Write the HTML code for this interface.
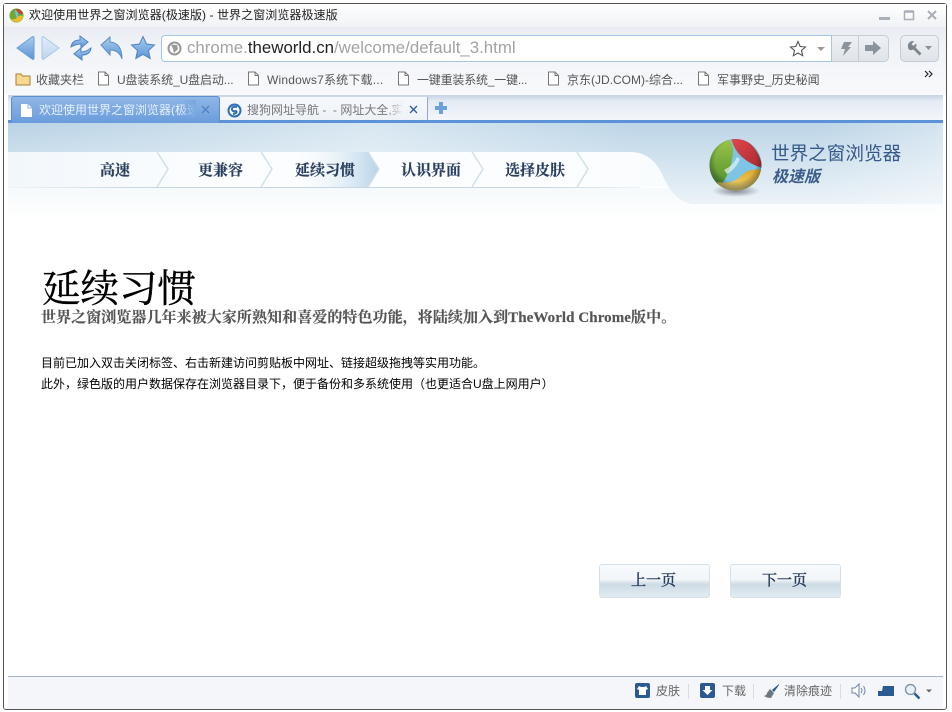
<!DOCTYPE html>
<html lang="zh"><head><meta charset="utf-8"><title>欢迎使用世界之窗浏览器(极速版)</title>
<style>
html,body{margin:0;padding:0;background:#fff}
body{width:952px;height:712px;position:relative;overflow:hidden;font-family:"Liberation Sans","Noto Sans CJK SC",sans-serif}
div,span,svg{position:absolute;box-sizing:border-box}
.t{white-space:nowrap;line-height:1}
.bm{font-size:12px;color:#555;top:74px}
.nav{font-size:15px;font-weight:bold;color:#2a3f60;top:162px;font-family:"Noto Serif CJK SC","Liberation Serif",serif;-webkit-text-stroke:.2px #2a3f60}
.st{font-size:12px;color:#666;top:685px}
.btn{font-size:15px;color:#2a3f60;top:572px;font-family:"Noto Serif CJK SC","Liberation Serif",serif;-webkit-text-stroke:.45px #2a3f60}
</style></head><body>
<!-- window -->
<div style="left:3px;top:3px;width:944px;height:707px;border:1px solid #555;border-radius:3px;background:#fff"></div>
<div style="left:4px;top:4px;width:942px;height:23px;background:linear-gradient(#fff,#f0f2f5)"></div>
<div style="left:4px;top:27px;width:942px;height:68px;background:linear-gradient(#e9edf3,#f0f3f7 30%,#f8f9fb)"></div>
<!-- title -->
<svg style="left:9px;top:8px" width="15" height="15" viewBox="0 0 15 15"><circle cx="7.5" cy="7.5" r="7" fill="#6fa92f"/><path d="M6 1q6-1 8 5q-3 1-5-2q-1-2-3-3" fill="#d23a35"/><path d="M2 11q5 1 6-2q2-2 6-1q-1 6-6 6q-4 0-6-3" fill="#eebb2c"/><path d="M6 2q3 2 3 4t-1 4q-2-3-2-8" fill="#7cc0e8"/></svg>
<div class="t" style="left:29px;top:9px;font-size:12px;letter-spacing:.07px;color:#222">欢迎使用世界之窗浏览器(极速版) - 世界之窗浏览器极速版</div>
<svg style="left:876px;top:8px" width="66" height="16" viewBox="0 0 66 16"><rect x="3" y="9" width="11" height="3" fill="#aab0b8"/><rect x="28.500" y="3.500" width="9" height="8" fill="none" stroke="#a8aeb6" stroke-width="1.500"/><path d="M28.500 3.500h9" stroke="#a8aeb6" stroke-width="2.500"/><path d="M52 3l8 8M60 3l-8 8" stroke="#a8aeb6" stroke-width="2"/></svg>
<!-- nav icons -->
<svg style="left:14px;top:34px" width="48" height="28" viewBox="0 0 48 28"><defs><linearGradient id="a" x1="0" y1="0" x2="0" y2="1"><stop offset="0" stop-color="#a9cdf0"/><stop offset="1" stop-color="#5b94d4"/></linearGradient><linearGradient id="b" x1="0" y1="0" x2="0" y2="1"><stop offset="0" stop-color="#e2eefa"/><stop offset="1" stop-color="#bcd5ef"/></linearGradient></defs><path d="M3 14L18 3q2-1 2 1v20q0 2-2 1z" fill="url(#a)" stroke="#6b9bd0"/><path d="M45 14L30 3q-2-1-2 1v20q0 2 2 1z" fill="url(#b)" stroke="#aac6e4"/></svg>
<svg style="left:68px;top:34px" width="26" height="28" viewBox="0 0 26 28"><path d="M3 13q1-7 9-7V2l8 6-7 6v-4q-5 0-10 3z" fill="url(#a)" stroke="#4f83c0"/><path d="M23 14q-1 7-9 7v5l-8-6 7-6v4q5 0 10-4z" fill="url(#a)" stroke="#4f83c0"/></svg>
<svg style="left:99px;top:35px" width="26" height="26" viewBox="0 0 26 26"><path d="M2 10L11 2v5q12 1 12 17q-3-9-12-9v5z" fill="url(#a)" stroke="#5c8dc6"/></svg>
<svg style="left:130px;top:35px" width="26" height="25" viewBox="0 0 26 25"><path d="M13 1.500l3.500 7.500 8 1-6 5.500 1.700 8L13 19.500 5.800 23.500l1.700-8-6-5.500 8-1z" fill="url(#a)" stroke="#4f83c0"/></svg>
<!-- address bar -->
<div style="left:161px;top:35px;width:671px;height:27px;background:#fff;border:1px solid #a6c6e4;border-radius:4px 0 0 4px"></div>
<svg style="left:167px;top:41px" width="15" height="15" viewBox="0 0 15 15"><circle cx="7.500" cy="7.500" r="7" fill="#999"/><circle cx="7.500" cy="7.500" r="5" fill="#fff"/><path d="M4 3.500l6 .5 1 4-4 4-1-4z" fill="#999"/></svg>
<div class="t" style="left:187px;top:40px;font-size:16.850px;color:#a3a3a3">chrome.<span style="position:static;color:#222">theworld.cn</span>/welcome/default_3.html</div>
<svg style="left:789px;top:40px" width="40" height="17" viewBox="0 0 40 17"><path d="M9 1.500l2.200 5 5.300.5-4 3.500 1.200 5.200L9 13l-4.700 2.700 1.200-5.200-4-3.500 5.300-.5z" fill="#fff" stroke="#555" stroke-width="1.100"/><path d="M28 7h8l-4 4z" fill="#999"/></svg>
<div style="left:832px;top:35px;width:57px;height:27px;background:linear-gradient(#eef1f5,#dfe4ea);border:1px solid #c6ccd4;border-left:0;border-radius:0 5px 5px 0"></div>
<div style="left:858px;top:36px;width:1px;height:25px;background:#c8cdd4"></div>
<svg style="left:836px;top:40px" width="50" height="17" viewBox="0 0 50 17"><path d="M8 2h8l-4 5h3L7 16l2-7H5z" fill="#8b939c"/><path d="M29 5h8V1l8 7-8 7v-4h-8z" fill="#8b939c"/></svg>
<div style="left:900px;top:35px;width:39px;height:27px;background:linear-gradient(#eef1f5,#dfe4ea);border:1px solid #c6ccd4;border-radius:5px"></div>
<svg style="left:906px;top:40px" width="28" height="17" viewBox="0 0 28 17"><path d="M2 5q1-4 5-4l1 .5-2.500 2.500 2 2 2.500-2.500.5 1q0 2-1 3l6 6-2 2-6-6q-2 1-4 .5-2-1.500-1.500-5z" fill="#7d858e"/><path d="M19 6h7l-3.500 4z" fill="#8b939c"/></svg>
<!-- bookmarks -->
<svg style="left:15px;top:72px" width="16" height="14" viewBox="0 0 16 14"><path d="M1 2h5l1.500 2H15v9H1z" fill="#f8d98f" stroke="#a87f35"/></svg>
<div class="t bm" style="left:36px">收藏夹栏</div>
<svg style="left:97px;top:71px" width="13" height="15" viewBox="0 0 13 15"><path d="M1.500 1h6.500l3.500 3.500v9.500h-10z" fill="#fff" stroke="#777"/><path d="M8 1v3.500h3.500" fill="none" stroke="#777"/></svg>
<div class="t bm" style="left:117px;letter-spacing:-.12px">U盘装系统_U盘启动...</div>
<svg style="left:247px;top:71px" width="13" height="15" viewBox="0 0 13 15"><path d="M1.500 1h6.500l3.500 3.500v9.500h-10z" fill="#fff" stroke="#777"/><path d="M8 1v3.500h3.500" fill="none" stroke="#777"/></svg>
<div class="t bm" style="left:267px;letter-spacing:.2px">Windows7系统下载...</div>
<svg style="left:397px;top:71px" width="13" height="15" viewBox="0 0 13 15"><path d="M1.500 1h6.500l3.500 3.500v9.500h-10z" fill="#fff" stroke="#777"/><path d="M8 1v3.500h3.500" fill="none" stroke="#777"/></svg>
<div class="t bm" style="left:417px;letter-spacing:-.2px">一键重装系统_一键...</div>
<svg style="left:547px;top:71px" width="13" height="15" viewBox="0 0 13 15"><path d="M1.500 1h6.500l3.500 3.500v9.500h-10z" fill="#fff" stroke="#777"/><path d="M8 1v3.500h3.500" fill="none" stroke="#777"/></svg>
<div class="t bm" style="left:567px">京东(JD.COM)-综合...</div>
<svg style="left:697px;top:71px" width="13" height="15" viewBox="0 0 13 15"><path d="M1.500 1h6.500l3.500 3.500v9.500h-10z" fill="#fff" stroke="#777"/><path d="M8 1v3.500h3.500" fill="none" stroke="#777"/></svg>
<div class="t bm" style="left:717px">军事野史_历史秘闻</div>
<svg style="left:924px;top:70px" width="10" height="8" viewBox="0 0 10 8"><path d="M1 1l3 3-3 3M5 1l3 3-3 3" fill="none" stroke="#222" stroke-width="1.200"/></svg>
<!-- tab strip -->
<div style="left:8px;top:95px;width:935px;height:25px;background:linear-gradient(#c5d2e3,#e4ebf4 25%,#f3f6fa)"></div>
<div style="left:8px;top:120px;width:935px;height:3px;background:#5c92d8"></div>
<div style="left:11px;top:96px;width:209px;height:27px;background:linear-gradient(#8fb7e6,#6a9cdc);border:1px solid #5d8fcf;border-bottom:0;border-radius:3px 3px 0 0"></div>
<svg style="left:20px;top:103px" width="13" height="15" viewBox="0 0 13 15"><path d="M1 1h7l4 4v9H1z" fill="#fff"/><path d="M8 1v4h4" fill="none" stroke="#8fb0dc"/></svg>
<div class="t" style="left:39px;top:104px;width:156px;overflow:hidden;font-size:12px;color:#e6effa">欢迎使用世界之窗浏览器(极速版)</div>
<div style="left:180px;top:100px;width:16px;height:18px;background:linear-gradient(90deg,rgba(120,167,224,0),#78a7e0)"></div>
<svg style="left:201px;top:105px" width="9" height="9" viewBox="0 0 9 9"><path d="M1 1l7 7M8 1l-7 7" stroke="#4a7cc0" stroke-width="1.200"/></svg>
<div style="left:220px;top:97px;width:208px;height:23px;background:linear-gradient(#f6f8fb,#eef2f7);border-right:1px solid #93a9c4"></div>
<svg style="left:227px;top:103px" width="15" height="15" viewBox="0 0 15 15"><circle cx="7.500" cy="7.500" r="7" fill="#2f6fb5"/><circle cx="7.500" cy="7.500" r="5" fill="#fff"/><path d="M10 4Q5 3 5 6t4 2q2 2-3 3" fill="none" stroke="#2f6fb5" stroke-width="2"/></svg>
<div class="t" style="left:247px;top:104px;width:155px;overflow:hidden;font-size:12px;color:#777">搜狗网址导航 -&nbsp; - 网址大全,实用</div>
<div style="left:386px;top:100px;width:17px;height:18px;background:linear-gradient(90deg,rgba(241,244,248,0),#f1f4f8)"></div>
<svg style="left:409px;top:105px" width="9" height="9" viewBox="0 0 9 9"><path d="M1 1l7 7M8 1l-7 7" stroke="#2d5fa5" stroke-width="1.300"/></svg>
<svg style="left:434px;top:101px" width="14" height="14" viewBox="0 0 14 14"><path d="M5 1h4v4h4v4H9v4H5V9H1V5h4z" fill="#6aa0dc"/></svg>
<!-- banner -->
<div style="left:8px;top:123px;width:660px;height:29px;background:linear-gradient(rgba(255,255,255,0),rgba(255,255,255,.25)),linear-gradient(90deg,#b9d3e6,#c6dbea 25%,#d8e7f1 55%,#bcd5e7 95%)"></div>
<div style="left:8px;top:152px;width:680px;height:35px;background:linear-gradient(90deg,#f2f7fb,#fbfdfe 30%,#fbfdfe 85%,#f8fbfd)"></div>
<div style="left:8px;top:187px;width:632px;height:1px;background:linear-gradient(90deg,#eef4f8,#c7d7e2 20%,#c7d7e2 85%,#eef4f8)"></div>
<div style="left:8px;top:188px;width:935px;height:34px;background:linear-gradient(#f6fafc,#fff)"></div>
<svg style="left:632px;top:123px" width="311" height="81" viewBox="0 0 311 81"><defs><linearGradient id="g" x1="0" y1="0" x2="0" y2="1"><stop offset="0" stop-color="#bcd5e7"/><stop offset="1" stop-color="#ecf3f8"/></linearGradient><linearGradient id="g2" x1="0" x2="1" y1="0" y2="0"><stop offset=".6" stop-color="#fff" stop-opacity="0"/><stop offset="1" stop-color="#fff" stop-opacity=".35"/></linearGradient></defs><path d="M0 0H311V81H60Q42 79 30 51Q20 30 0 29Z" fill="url(#g)"/><path d="M0 0H311V81H60Q42 79 30 51Q20 30 0 29Z" fill="url(#g2)"/></svg>
<svg style="left:100px;top:152px" width="500" height="36" viewBox="0 0 500 36"><defs><linearGradient id="n" x1="0" x2="1"><stop offset="0" stop-color="#fff" stop-opacity="0"/><stop offset="1" stop-color="#b7d3e8"/></linearGradient></defs><path d="M190 0h78l11 17-11 18h-78z" fill="url(#n)"/><path d="M57 0l11 17-11 18M161 0l11 17-11 18M268 0l11 17-11 18M372 0l11 17-11 18M477 0l11 17-11 18" fill="none" stroke="#d2e0ea" stroke-width="1.500"/></svg>
<div class="t nav" style="left:100px">高速</div>
<div class="t nav" style="left:198px">更兼容</div>
<div class="t nav" style="left:295px">延续习惯</div>
<div class="t nav" style="left:401px">认识界面</div>
<div class="t nav" style="left:505px">选择皮肤</div>
<!-- logo -->
<svg style="left:705px;top:136px" width="62" height="66" viewBox="0 0 62 66"><defs><radialGradient id="sh"><stop offset="0" stop-color="#334" stop-opacity=".55"/><stop offset="1" stop-color="#334" stop-opacity="0"/></radialGradient><radialGradient id="ed" cx=".5" cy=".42" r=".55"><stop offset=".72" stop-color="#000" stop-opacity="0"/><stop offset="1" stop-color="#233" stop-opacity=".45"/></radialGradient><linearGradient id="gr" x1="0" y1="0" x2="0" y2="1"><stop offset="0" stop-color="#9ac64a"/><stop offset="1" stop-color="#4f8e2a"/></linearGradient><linearGradient id="rd" x1="0" y1="0" x2="1" y2="1"><stop offset="0" stop-color="#e2474c"/><stop offset="1" stop-color="#a82a32"/></linearGradient><linearGradient id="yl" x1="0" y1="0" x2="0" y2="1"><stop offset="0" stop-color="#e0a825"/><stop offset="1" stop-color="#f8e28a"/></linearGradient><clipPath id="c"><circle cx="30.500" cy="29" r="26"/></clipPath></defs><ellipse cx="31" cy="55" rx="24" ry="6" fill="url(#sh)"/><g clip-path="url(#c)"><rect width="62" height="62" fill="#7ec4e4"/><path d="M3 29Q6 6 24 3q6 7 3 20-2 14-12 28Q3 42 3 29z" fill="url(#gr)"/><path d="M26 2Q50 0 58 32 46 29 37 21 29 14 26 2z" fill="url(#rd)"/><path d="M12 46q16 3 25-7 8-7 20-5-3 24-26 24-12 0-19-12z" fill="url(#yl)"/><path d="M19 34q9-4 13-13l3 2q-4 10-13 15z" fill="#e6f3fa" opacity=".7"/><circle cx="30.500" cy="29" r="26" fill="url(#ed)"/></g></svg>
<div class="t" style="left:771px;top:145px;font-size:18.600px;color:#35598a">世界之窗浏览器</div>
<div class="t" style="left:772px;top:170px;font-size:16px;font-weight:bold;font-style:italic;color:#3a5d8c">极速版</div>
<!-- content -->
<div class="t" style="left:42px;top:268px;font-size:38.500px;color:#000;font-family:'Noto Serif CJK SC','Liberation Serif',serif;-webkit-text-stroke:.35px #000">延续习惯</div>
<div class="t" style="left:41px;top:311px;font-size:15px;font-weight:bold;color:#555;font-family:'Liberation Serif','Noto Serif CJK SC',serif;letter-spacing:.07px;-webkit-text-stroke:.15px #555">世界之窗浏览器几年来被大家所熟知和喜爱的特色功能，将陆续加入到TheWorld Chrome版中。</div>
<div class="t" style="left:41px;top:357px;font-size:12px;color:#000">目前已加入双击关闭标签、右击新建访问剪贴板中网址、链接超级拖拽等实用功能。</div>
<div class="t" style="left:41px;top:378px;font-size:12px;color:#000">此外，绿色版的用户数据保存在浏览器目录下，便于备份和多系统使用（也更适合U盘上网用户）</div>
<!-- buttons -->
<div style="left:599px;top:564px;width:111px;height:34px;border:1px solid #d3e1ea;border-radius:3px;background:linear-gradient(#f8fafc,#f2f6f9 45%,#cddbe5 60%,#e2ebf1)"></div>
<div style="left:730px;top:564px;width:111px;height:34px;border:1px solid #d3e1ea;border-radius:3px;background:linear-gradient(#f8fafc,#f2f6f9 45%,#cddbe5 60%,#e2ebf1)"></div>
<div class="t btn" style="left:631px">上一页</div>
<div class="t btn" style="left:762px">下一页</div>
<!-- status -->
<div style="left:8px;top:676px;width:935px;height:33px;background:#f4f6f9;border-top:1px solid #a9b4c2"></div>
<svg style="left:635px;top:683px" width="15" height="15" viewBox="0 0 15 15"><rect width="15" height="15" rx="2" fill="#2a5a91"/><path d="M4 3l2 1h3l2-1 2 3-2 1v5H4V7L2 6z" fill="#fff"/></svg>
<div class="t st" style="left:656px">皮肤</div>
<div style="left:688px;top:684px;width:1px;height:15px;background:#d8dce2"></div>
<svg style="left:700px;top:683px" width="15" height="15" viewBox="0 0 15 15"><rect width="15" height="15" rx="2" fill="#2a5a91"/><path d="M5 3h5v4h2.500l-5 5-5-5H5z" fill="#fff"/></svg>
<div class="t st" style="left:722px">下载</div>
<div style="left:753px;top:684px;width:1px;height:15px;background:#d8dce2"></div>
<svg style="left:763px;top:683px" width="17" height="16" viewBox="0 0 17 16"><path d="M16 1L9 7l2 2 5-7z" fill="#2a5a91"/><path d="M7 6l4 4-3 5q-4 0-7-2 3-1 3-3z" fill="#6b7785"/></svg>
<div class="t st" style="left:784px">清除痕迹</div>
<div style="left:840px;top:684px;width:1px;height:15px;background:#d8dce2"></div>
<svg style="left:851px;top:683px" width="17" height="15" viewBox="0 0 17 15"><path d="M1 5h3l4-4v13l-4-4H1z" fill="#fff" stroke="#6f87a6"/><path d="M10 5q2 2.500 0 5M12.500 3q3 4.500 0 9" fill="none" stroke="#6f87a6"/></svg>
<svg style="left:878px;top:685px" width="17" height="12" viewBox="0 0 17 12"><path d="M5 1h11v10H0V6h4z" fill="#2a5a91"/></svg>
<svg style="left:904px;top:683px" width="30" height="17" viewBox="0 0 30 17"><circle cx="6.500" cy="6.500" r="5" fill="#e9f1f8" stroke="#7b8da3" stroke-width="1.300"/><path d="M10.500 10.500l5 5" stroke="#2a5a91" stroke-width="2.500"/><path d="M22 6.500h6l-3 3z" fill="#666"/></svg>
</body></html>
